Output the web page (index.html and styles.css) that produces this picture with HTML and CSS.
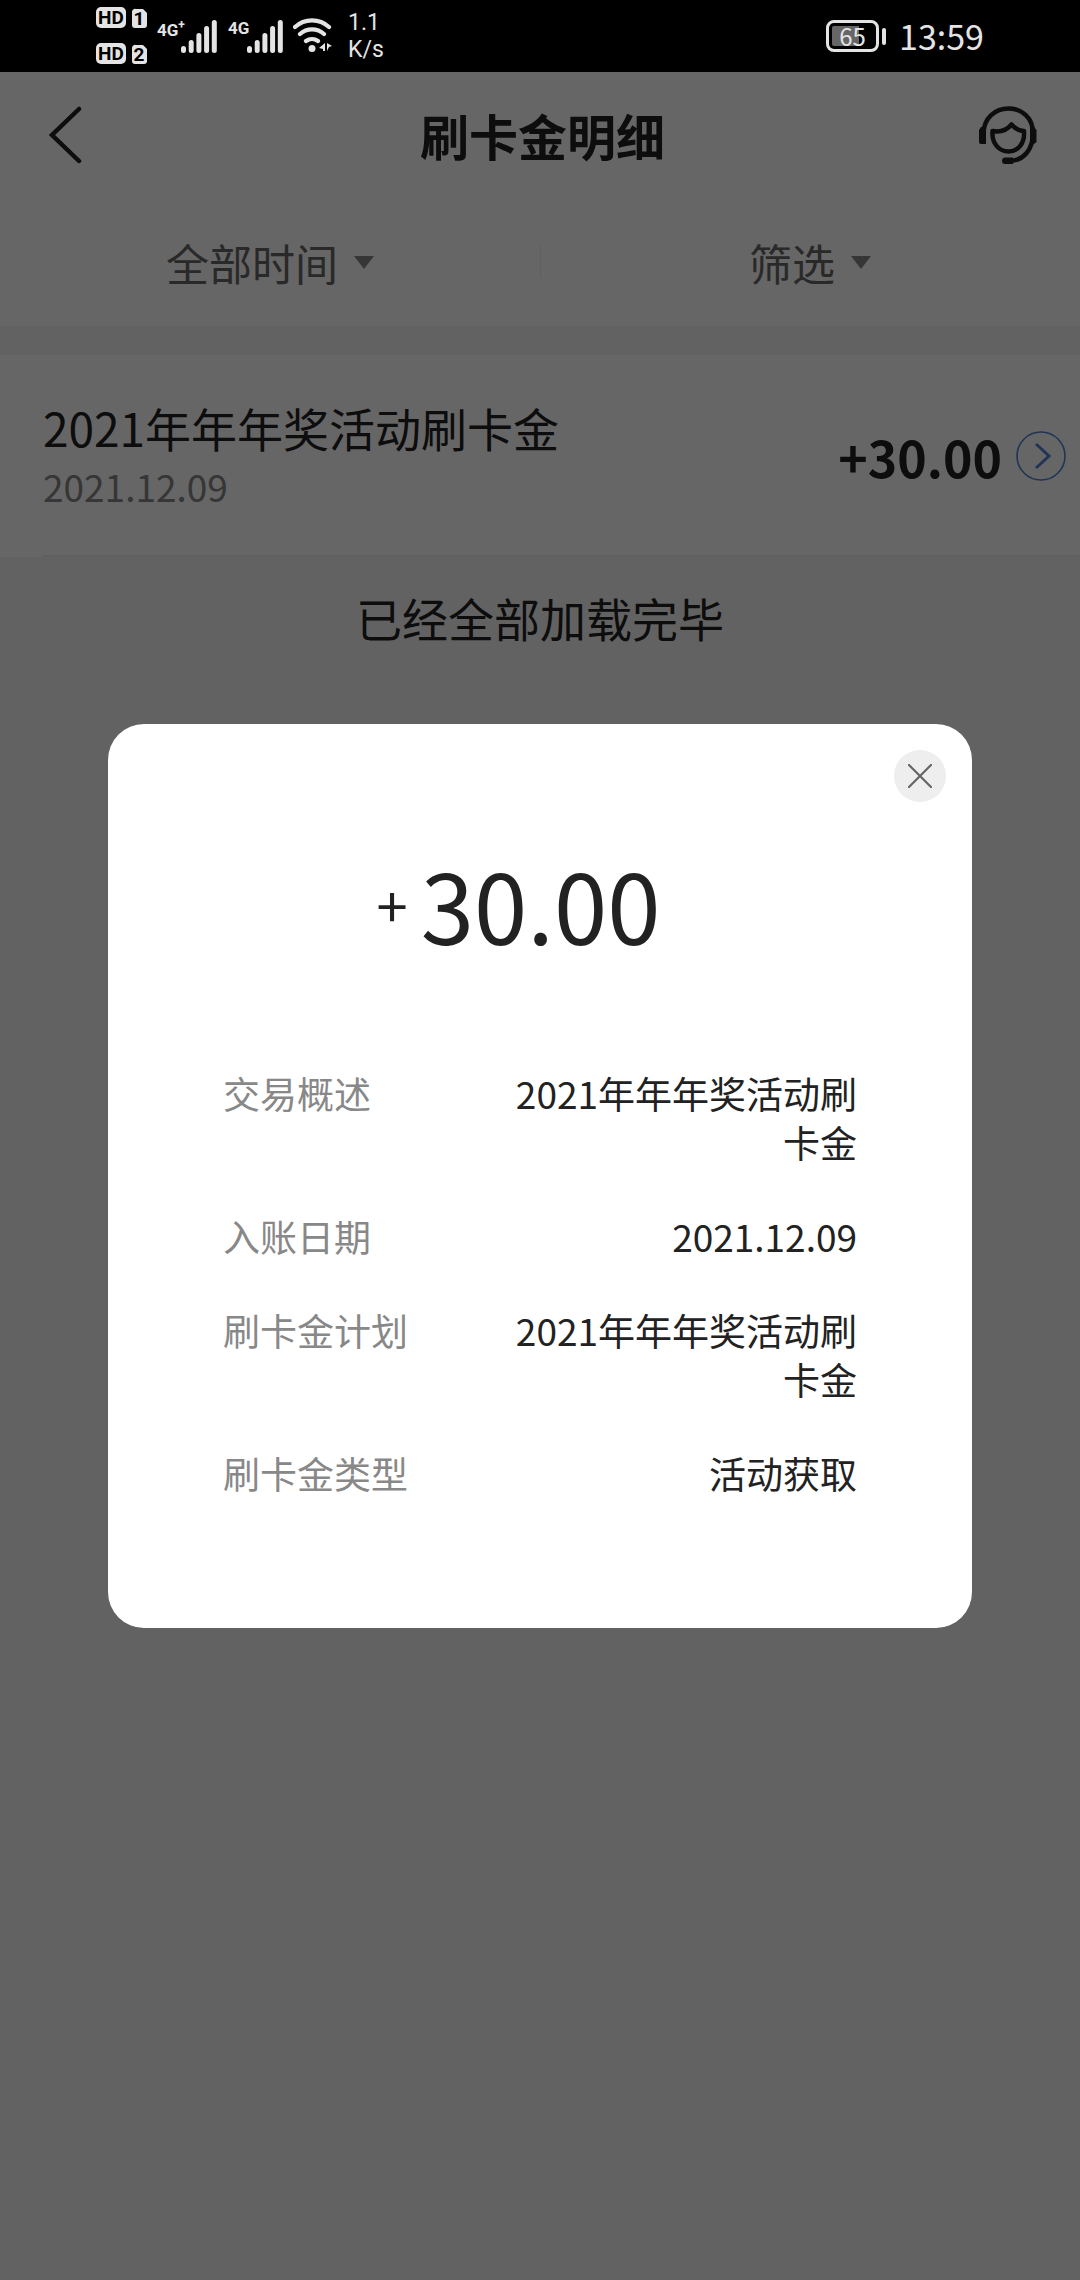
FILE: index.html
```html
<!DOCTYPE html>
<html lang="zh-CN">
<head>
<meta charset="utf-8">
<meta name="viewport" content="width=device-width, initial-scale=1">
<title>刷卡金明细</title>
<link rel="stylesheet" href="styles.css">
</head>
<body>
<div class="status-bar">
  <div class="status-left">
    <svg class="sim-badges" width="52" height="58" viewBox="0 0 52 58" aria-hidden="true">
      <rect x="0" y="0" width="30" height="21" rx="5" fill="#e4e4e4"/>
      <path d="M40 2h7l4 4v12a3 3 0 0 1-3 3h-9a3 3 0 0 1-3-3V5a3 3 0 0 1 4-3z" fill="#e4e4e4"/>
      <rect x="0" y="36" width="30" height="21" rx="5" fill="#e4e4e4"/>
      <path d="M40 38h7l4 4v12a3 3 0 0 1-3 3h-9a3 3 0 0 1-3-3V41a3 3 0 0 1 4-3z" fill="#e4e4e4"/>
      <text class="badge-text" x="15" y="17" text-anchor="middle">HD</text>
      <text class="badge-text" x="43" y="18" text-anchor="middle">1</text>
      <text class="badge-text" x="15" y="53" text-anchor="middle">HD</text>
      <text class="badge-text" x="43" y="54" text-anchor="middle">2</text>
    </svg>
    <div class="signal">
      <span class="net">4G<sup class="net-plus">+</sup></span>
      <svg width="36" height="34" viewBox="0 0 36 34" aria-hidden="true"><path class="bars" d="M2.500 29.500v2M10.200 23.500v8M17.900 16.500v15M25.600 9.500v22M33.300 3.500v28"/></svg>
    </div>
    <div class="signal signal-second">
      <span class="net">4G</span>
      <svg width="36" height="34" viewBox="0 0 36 34" aria-hidden="true"><path class="bars" d="M2.500 29.500v2M10.200 23.500v8M17.900 16.500v15M25.600 9.500v22M33.300 3.500v28"/></svg>
    </div>
    <svg class="wifi" width="40" height="36" viewBox="0 0 40 36" aria-hidden="true">
      <path d="M2 9a25 25 0 0 1 34 0M7 16a18 18 0 0 1 24 0M13 23a10 10 0 0 1 12 0" fill="none" stroke="#e4e4e4" stroke-width="4.200" stroke-linecap="round"/>
      <circle cx="19" cy="30.500" r="3.500" fill="#e4e4e4"/>
      <path d="M32 25v8h-2v-2l-4-1zM34 33v-8l5 3-3 1z" fill="#e4e4e4"/>
    </svg>
    <div class="speed">1.1<br>K/s</div>
  </div>
  <div class="status-right">
    <div class="battery"><span class="battery-box">65</span><span class="battery-tip"></span></div>
    <span class="clock">13:59</span>
  </div>
</div>

<div class="screen">
  <header class="nav">
    <button class="icon-button" type="button" aria-label="返回">
      <svg width="34" height="58" viewBox="0 0 34 58" aria-hidden="true"><path d="M31 3L4 29L31 55" fill="none" stroke="#222" stroke-width="4.500" stroke-linecap="round"/></svg>
    </button>
    <h1 class="nav-title">刷卡金明细</h1>
    <button class="icon-button" type="button" aria-label="客服">
      <svg width="58" height="58" viewBox="0 0 58 58" fill="none" stroke="#222" stroke-width="4.500" aria-hidden="true">
        <path d="M4.500 27C5 12 16 2.500 29.500 2.500S54 12 54 27C54 43 45 55 30 55"/>
        <path d="M13.500 25C21 26.500 28 24 32.500 18.500C36 22.500 40 25 45 25C46 38 38.500 45.500 29.500 45.500S12.500 38 13.500 25z" stroke-linejoin="round"/>
        <path d="M2 21H7V38H2Q0 38 0 36V24zM51 21H55L57.500 24V36L55 38H51zM26 51.500H34V58H26Q23 58 23 55Q23 51.500 26 51.500z" fill="#222" stroke="none"/>
      </svg>
    </button>
  </header>
  <div class="filters">
    <button class="filter" type="button">全部时间<span class="caret"></span></button>
    <button class="filter" type="button">筛选<span class="caret"></span></button>
  </div>

  <main>
    <a class="record" href="#detail">
      <div class="record-info">
        <div class="record-name">2021年年年奖活动刷卡金</div>
        <div class="record-date">2021.12.09</div>
      </div>
      <span class="record-amount">+30.00</span>
      <svg width="50" height="50" viewBox="0 0 50 50" fill="none" stroke="#5284d6" aria-hidden="true"><circle cx="25" cy="25" r="24" stroke-width="1.600"/><path d="M20 13L33 25L20 37" stroke-width="3"/></svg>
    </a>
    <p class="list-end">已经全部加载完毕</p>
  </main>

  <div class="overlay">
    <section class="dialog" id="detail" role="dialog" aria-modal="true" aria-label="交易详情">
      <button class="close" type="button" aria-label="关闭">
        <svg width="24" height="24" viewBox="0 0 24 24" aria-hidden="true"><path d="M1 1L23 23M23 1L1 23" stroke="#666" stroke-width="2.200" stroke-linecap="round"/></svg>
      </button>
      <div class="total"><span class="sign">+</span><span>30.00</span></div>
      <dl class="details">
        <div class="detail"><dt>交易概述</dt><dd>2021年年年奖活动刷卡金</dd></div>
        <div class="detail"><dt>入账日期</dt><dd>2021.12.09</dd></div>
        <div class="detail"><dt>刷卡金计划</dt><dd>2021年年年奖活动刷卡金</dd></div>
        <div class="detail"><dt>刷卡金类型</dt><dd>活动获取</dd></div>
      </dl>
    </section>
  </div>
</div>
</body>
</html>
```

FILE: styles.css
```css
* {
  box-sizing: border-box;
}

body {
  margin: 0;
  min-height: 100vh;
  display: flex;
  flex-direction: column;
  background: #f5f5f5;
  color: #222;
  font-family: "Noto Sans CJK SC", sans-serif;
}

button {
  border: 0;
  padding: 0;
  background: none;
  color: inherit;
  font: inherit;
}

svg {
  display: block;
  flex: none;
}

/* System status bar */
.status-bar {
  height: 72px;
  padding: 0 96px;
  display: flex;
  justify-content: space-between;
  background: #000;
  color: #e4e4e4;
}

.status-left,
.status-right,
.battery {
  display: flex;
  align-items: center;
}

.badge-text {
  font: bold 19px Roboto, sans-serif;
  fill: #000;
}

.signal {
  display: flex;
  margin-left: 9px;
}

.signal-second {
  margin-left: 11px;
}

.net {
  width: 24px;
  font: bold 17px/18px "Roboto", sans-serif;
  white-space: nowrap;
}

.signal-second .net {
  width: 19px;
}

.net-plus {
  font-size: 12px;
  line-height: 1;
}

.bars {
  fill: none;
  stroke: #e4e4e4;
  stroke-width: 5;
  stroke-linecap: round;
}

.wifi {
  margin-left: 10px;
}

.speed {
  margin-left: 15px;
  font: 23px/27px Roboto, sans-serif;
}

.battery-box {
  width: 53px;
  height: 32px;
  border: 3px solid #e4e4e4;
  border-radius: 8px;
  background: linear-gradient(90deg, #666 65%, #000 65%) content-box;
  padding: 3px;
  font: 24px/20px "Noto Sans CJK SC", sans-serif;
  text-align: center;
}

.battery-tip {
  width: 4px;
  height: 17px;
  margin-left: 3px;
  border-radius: 2px;
  background: #e4e4e4;
}

.clock {
  margin-left: 13px;
  font: 34px/40px "Noto Sans CJK SC", sans-serif;
}

/* App area under the status bar */
.screen {
  position: relative;
  flex: 1;
}

.nav {
  height: 126px;
  padding: 0 43px 0 48px;
  display: flex;
  align-items: center;
  justify-content: space-between;
  background: #fff;
}

.icon-button {
  width: 58px;
}

.nav-title {
  margin: 0;
  font-size: 49px;
  line-height: 72px;
}

.filters {
  height: 128px;
  display: grid;
  grid-template-columns: 1fr 1fr;
  background: #fff;
}

.filter {
  display: flex;
  align-items: center;
  justify-content: center;
  gap: 16px;
  color: #666;
  font-size: 43px;
  line-height: 64px;
}

.filter + .filter {
  background: linear-gradient(#eee, #eee) left center / 1px 32px no-repeat;
}

.caret {
  border: 10px solid transparent;
  border-top: 13px solid #888;
  border-bottom: 0;
}

.record {
  margin-top: 29px;
  height: 202px;
  padding: 0 14px 0 43px;
  display: flex;
  align-items: center;
  background: linear-gradient(#eee, #eee) 43px bottom / 100% 2px no-repeat #fff;
  color: #222;
  text-decoration: none;
}

.record-info {
  flex: 1;
  padding-bottom: 4px;
}

.record-name {
  font-size: 46px;
  line-height: 64px;
}

.record-date {
  color: #888;
  font-size: 37px;
  line-height: 54px;
}

.record-amount {
  margin-right: 14px;
  font-size: 50px;
  font-weight: bold;
  line-height: 64px;
}

.list-end {
  margin: 28px 0 0;
  font-size: 46px;
  line-height: 64px;
  text-align: center;
}

/* Transaction detail dialog */
.overlay {
  position: absolute;
  inset: 0;
  display: grid;
  place-items: center;
  background: rgba(0, 0, 0, 0.6);
}

.dialog {
  position: relative;
  width: 80%;
  padding: 120px 115px 130px;
  border-radius: 36px;
  background: #fff;
}

.close {
  position: absolute;
  top: 26px;
  right: 26px;
  width: 52px;
  height: 52px;
  display: grid;
  place-items: center;
  border-radius: 50%;
  background: #eee;
}

.total {
  height: 120px;
  display: flex;
  justify-content: center;
  align-items: center;
  gap: 13px;
  padding-right: 43px;
  font-size: 96px;
  line-height: 120px;
}

.sign {
  font-size: 56px;
}

.details {
  margin: 105px 0 0;
  display: grid;
  gap: 45px;
  font-size: 37px;
  line-height: 49px;
}

.detail {
  display: flex;
  justify-content: space-between;
}

dt {
  color: #888;
}

dd {
  margin: 0;
  max-width: 55%;
  text-align: right;
}
```
